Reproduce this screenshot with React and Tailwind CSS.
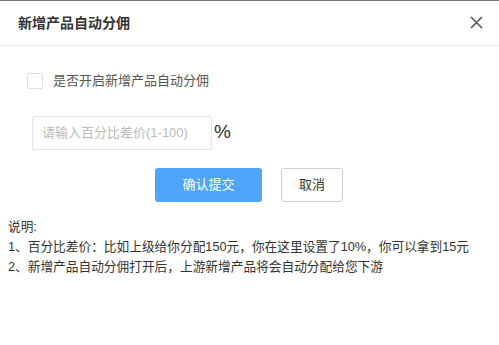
export default function App() {
  return (
    <div
      className="w-[499px] h-[345px] bg-white border-t border-[#777] overflow-hidden"
      style={{ fontFamily: '"Liberation Sans", "Noto Sans CJK SC", sans-serif' }}
    >
      {/* header */}
      <div className="h-[45px] flex items-center justify-between pl-[18px] pr-[16px] border-b border-[#f0f0f0]">
        <span className="text-[14px] font-bold text-[#333]">新增产品自动分佣</span>
        <svg width="13" height="13" viewBox="0 0 13 13" className="mt-[-2px]">
          <path d="M1 1L12 12M12 1L1 12" stroke="#555" strokeWidth="1.6" />
        </svg>
      </div>

      {/* body */}
      <div className="pt-[25px]">
        <label className="flex items-center pl-[27px] gap-[10px]">
          <span className="w-[16px] h-[16px] border border-[#dcdfe6] rounded-[2px] bg-white" />
          <span className="text-[13px] text-[#555]">是否开启新增产品自动分佣</span>
        </label>

        <div className="flex items-center pl-[32px] mt-[25px]">
          <div className="w-[180px] h-[34px] border border-[#e4e4e4] rounded-[2px] flex items-center px-[9px]">
            <span className="text-[13px] text-[#bbb]">请输入百分比差价(1-100)</span>
          </div>
          <span className="ml-[2px] text-[19px] text-[#333]">%</span>
        </div>

        <div className="flex pl-[155px] mt-[18px] gap-[19px]">
          <button className="w-[107px] h-[34px] bg-[#4ea5f9] rounded-[3px] text-white text-[13px]">
            确认提交
          </button>
          <button className="w-[62px] h-[34px] border border-[#ccc] rounded-[3px] bg-white text-[13px] text-[#333]">
            取消
          </button>
        </div>

        <div className="mt-[15px] pl-[8px] text-[12.7px] text-[#333] leading-[20px]">
          <div>说明:</div>
          <div>1、百分比差价：比如上级给你分配150元，你在这里设置了10%，你可以拿到15元</div>
          <div>2、新增产品自动分佣打开后，上游新增产品将会自动分配给您下游</div>
        </div>
      </div>
    </div>
  );
}
